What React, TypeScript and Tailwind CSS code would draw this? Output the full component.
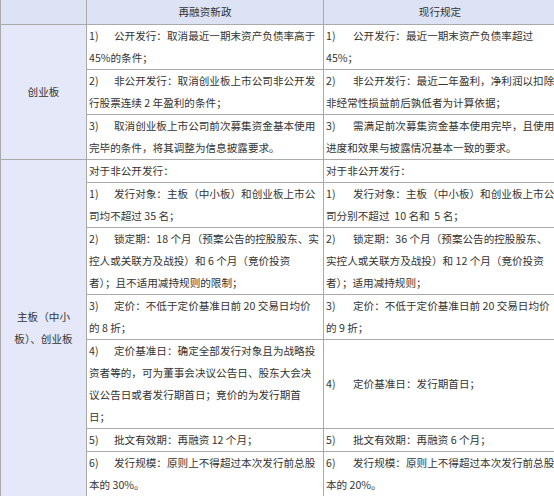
import React from "react";

type Cell = { m?: string; lines: string[]; center?: boolean };
type Row = { l: Cell; r: Cell };

const groupA: Row[] = [
  {
    l: { m: "1)", lines: ["公开发行：取消最近一期末资产负债率高于", "45%的条件；"] },
    r: { m: "1)", lines: ["公开发行：最近一期末资产负债率超过", "45%；"] },
  },
  {
    l: { m: "2)", lines: ["非公开发行：取消创业板上市公司非公开发", "行股票连续 2 年盈利的条件；"] },
    r: { m: "2)", lines: ["非公开发行：最近二年盈利，净利润以扣除", "非经常性损益前后孰低者为计算依据；"] },
  },
  {
    l: { m: "3)", lines: ["取消创业板上市公司前次募集资金基本使用", "完毕的条件，将其调整为信息披露要求。"] },
    r: { m: "3)", lines: ["需满足前次募集资金基本使用完毕，且使用", "进度和效果与披露情况基本一致的要求。"] },
  },
];

const groupB: Row[] = [
  {
    l: { lines: ["对于非公开发行："] },
    r: { lines: ["对于非公开发行："] },
  },
  {
    l: { m: "1)", lines: ["发行对象：主板（中小板）和创业板上市公", "司均不超过 35 名；"] },
    r: { m: "1)", lines: ["发行对象：主板（中小板）和创业板上市公", "司分别不超过\u00a0 10 名和\u00a0 5 名；"] },
  },
  {
    l: {
      m: "2)",
      lines: ["锁定期：18 个月（预案公告的控股股东、实", "控人或关联方及战投）和 6 个月（竞价投资", "者）；且不适用减持规则的限制；"],
    },
    r: {
      m: "2)",
      lines: ["锁定期：36 个月（预案公告的控股股东、", "实控人或关联方及战投）和 12 个月（竞价投资", "者）；适用减持规则；"],
    },
  },
  {
    l: { m: "3)", lines: ["定价：不低于定价基准日前 20 交易日均价", "的 8 折；"] },
    r: { m: "3)", lines: ["定价：不低于定价基准日前 20 交易日均价", "的 9 折；"] },
  },
  {
    l: {
      m: "4)",
      lines: [
        "定价基准日：确定全部发行对象且为战略投",
        "资者等的，可为董事会决议公告日、股东大会决",
        "议公告日或者发行期首日；竞价的为发行期首",
        "日；",
      ],
    },
    r: { m: "4)", lines: ["定价基准日：发行期首日；"], center: true },
  },
  {
    l: { m: "5)", lines: ["批文有效期：再融资 12 个月；"] },
    r: { m: "5)", lines: ["批文有效期：再融资 6 个月；"] },
  },
  {
    l: { m: "6)", lines: ["发行规模：原则上不得超过本次发行前总股", "本的 30%。"] },
    r: { m: "6)", lines: ["发行规模：原则上不得超过本次发行前总股", "本的 20%。"] },
  },
];

function Content({ cell, gap }: { cell: Cell; gap: string }) {
  return (
    <td
      className={`border border-[#aaaaaa] pl-[2px] pr-0 py-0 ${cell.center ? "align-middle" : "align-top"}`}
    >
      {cell.lines.map((line, i) => (
        <div key={i} className="whitespace-nowrap overflow-hidden">
          {i === 0 && cell.m && <span className={`inline-block ${gap}`}>{cell.m}</span>}
          {line}
        </div>
      ))}
    </td>
  );
}

function Group({ label, rows }: { label: React.ReactNode; rows: Row[] }) {
  return (
    <>
      {rows.map((row, i) => (
        <tr key={i}>
          {i === 0 && (
            <td
              rowSpan={rows.length}
              className="border border-l border-[#aaaaaa] bg-[#e4e8f8] text-center align-middle"
            >
              {label}
            </td>
          )}
          <Content cell={row.l} gap="w-[25px]" />
          <Content cell={row.r} gap="w-[27px]" />
        </tr>
      ))}
    </>
  );
}

export default function App() {
  return (
    <div
      className="w-[554px] h-[496px] overflow-hidden bg-white text-[#333333] text-[10.6px] leading-[22px]"
      style={{ fontFamily: '"Noto Sans CJK SC", "Noto Sans", sans-serif' }}
    >
      <table className="border-collapse table-fixed w-[556px]">
        <colgroup>
          <col className="w-[86px]" />
          <col className="w-[237px]" />
          <col className="w-[233px]" />
        </colgroup>
        <thead>
          <tr className="bg-[#dde2f4]">
            <th className="border border-t-0 border-[#aaaaaa] h-6 font-normal" />
            <th className="border border-t-0 border-[#aaaaaa] h-6 font-normal text-center">再融资新政</th>
            <th className="border border-t-0 border-[#aaaaaa] h-6 font-normal text-center">现行规定</th>
          </tr>
        </thead>
        <tbody>
          <Group label="创业板" rows={groupA} />
          <Group
            label={
              <>
                主板（中小
                <br />
                板）、创业板
              </>
            }
            rows={groupB}
          />
        </tbody>
      </table>
    </div>
  );
}
